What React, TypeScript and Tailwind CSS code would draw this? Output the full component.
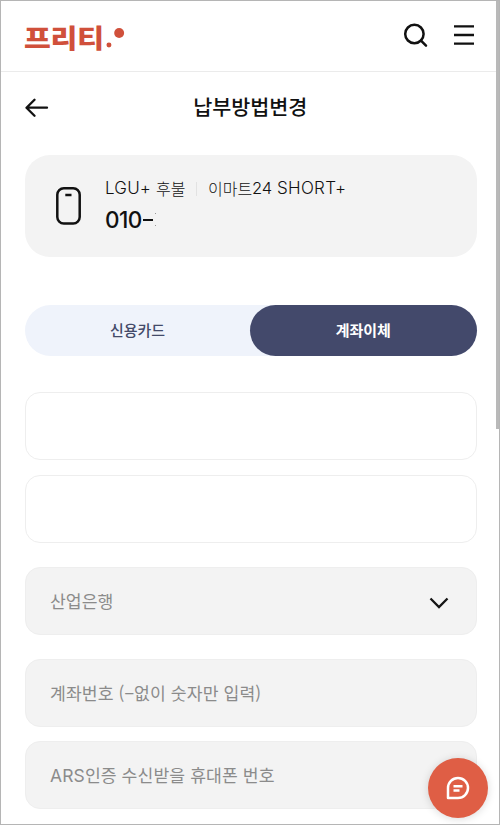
import React from "react";

function Logo() {
  return (
    <div className="mt-px flex h-6 w-[102px] items-center text-[#d0503b]" role="img" aria-label="프리티">
      <span className="w-[81px] origin-left scale-x-[1.12] whitespace-nowrap text-[26px] leading-6 font-black tracking-[-0.2px]">
        프리티
      </span>
      <svg width="22" height="24" viewBox="0 0 22 24" fill="#d0503b">
        <circle cx="5" cy="20" r="2.5" />
        <circle cx="15.3" cy="8" r="5" />
      </svg>
    </div>
  );
}

function Field({ children }: { children: React.ReactNode }) {
  return (
    <div className="flex h-[68px] shrink-0 items-center justify-between rounded-[15px] border border-[#eeeeee] bg-[#f3f3f3] px-6 text-[17.2px] text-[#8b8b8b]">
      {children}
    </div>
  );
}

export default function App() {
  return (
    <div
      lang="ko"
      className="relative flex h-[825px] w-[500px] flex-col overflow-hidden border border-[#b5b5b5] bg-white font-['Noto_Sans_CJK_KR',sans-serif] text-[#111111]"
    >
      <header className="flex h-[71px] shrink-0 items-center justify-between border-b border-[#ebebeb] pr-[24px] pl-[23px]">
        <Logo />
        <div className="flex items-center gap-[24px]">
          <svg width="28" height="28" viewBox="0 0 28 28" fill="none" stroke="currentColor" strokeWidth="2.5" strokeLinecap="round">
            <circle cx="13.4" cy="12" r="9.2" />
            <path d="M20 18.6l5 5" />
          </svg>
          <svg width="22" height="28" viewBox="0 0 22 28" stroke="currentColor" strokeWidth="2.3">
            <path d="M1 4.3h20M1 13h20M1 21.7h20" />
          </svg>
        </div>
      </header>

      <main className="flex flex-col pr-[22.5px] pl-6">
        <div className="grid h-[72px] grid-cols-[1fr_auto_1fr] items-center">
          <svg width="24" height="24" viewBox="0 0 24 24" fill="none" stroke="currentColor" strokeWidth="2.3" strokeLinecap="round" strokeLinejoin="round">
            <path d="M22 11.7H2M9.5 3.7L1.5 11.7l8 8" />
          </svg>
          <h1 className="mr-[1px] mb-1 text-[20.7px] leading-none font-medium">납부방법변경</h1>
        </div>

        <section className="mt-[11px] flex h-[102px] items-center rounded-[25px] bg-[#f3f3f3] pl-[31px]">
          <svg width="25" height="38" viewBox="0 0 25 38" fill="none" stroke="currentColor" strokeWidth="2.5">
            <rect x="1.3" y="1.3" width="22.4" height="35.2" rx="6.5" />
            <path d="M9.3 8h6.2" />
          </svg>
          <div className="mb-[3px] ml-6 flex flex-col">
            <div className="flex h-[30px] items-center text-[16px] whitespace-nowrap font-light">
              <span className="w-[51px] font-['Inter',sans-serif] text-[17px] tracking-[0.2px]">LGU+</span>
              <span className="mb-px w-[29px]">후불</span>
              <span className="mx-[11px] h-[14px] w-px bg-[#e2e2e2]" />
              <span className="mb-px w-[44px]">이마트</span>
              <span className="w-[25px] font-['Inter',sans-serif] text-[16.5px] tracking-[-0.2px]">24</span>
              <span className="font-['Inter',sans-serif] text-[17px] tracking-[0.3px]">SHORT+</span>
            </div>
            <div className="flex h-8 items-center font-['Inter',sans-serif] text-[22.5px] font-medium">
              <span className="w-[37px] tracking-[-0.6px]">010</span>
              <span className="ml-px h-[2px] w-[10px] bg-[#111111]" />
              <span className="ml-[2px] flex flex-col gap-[11px]">
                <span className="size-px bg-[#999999]" />
                <span className="size-px bg-[#999999]" />
              </span>
            </div>
          </div>
        </section>

        <div className="mt-12 flex h-[51px] rounded-full bg-[#eff3fb] text-[15px] font-medium">
          <button className="w-[225px] text-[#434a69]">신용카드</button>
          <button className="flex-1 rounded-full bg-[#43496b] font-bold text-white">계좌이체</button>
        </div>

        <div className="mt-9 h-[68px] rounded-[15px] border border-[#eeeeee]" />
        <div className="mt-[15px] mb-6 h-[68px] rounded-[15px] border border-[#eeeeee]" />

        <Field>
          <span>산업은행</span>
          <svg className="mt-1 mr-[3px]" width="20" height="12" viewBox="0 0 20 12" fill="none" stroke="#151515" strokeWidth="2.3">
            <path d="M1.5 1.5L10 10l8.5-8.5" />
          </svg>
        </Field>
        <div className="h-6" />
        <Field>
          <span className="tracking-[0.1px]">계좌번호 (−없이 숫자만 입력)</span>
        </Field>
        <div className="h-[14px]" />
        <Field>
          <span className="mt-px tracking-[0.1px]">
            <span className="font-['Inter',sans-serif] text-[17.5px]">ARS</span>인증 수신받을 휴대폰 번호
          </span>
        </Field>
      </main>

      <div className="absolute top-0 right-0 h-[428px] w-[3px] bg-[#b9b9b9]" />

      <button className="absolute top-[757px] left-[427px] flex size-[60px] items-center justify-center rounded-full bg-[#df5e45] shadow-[0_1px_8px_rgba(0,0,0,0.15)]">
        <svg width="24" height="24" viewBox="0 0 24 24" fill="none" stroke="white" strokeWidth="2.5" strokeLinejoin="round">
          <path d="M2 22V12a10 10 0 1 1 10 10z" />
          <path d="M7.5 10.3h9M7.5 14.4h6" />
        </svg>
      </button>
    </div>
  );
}
